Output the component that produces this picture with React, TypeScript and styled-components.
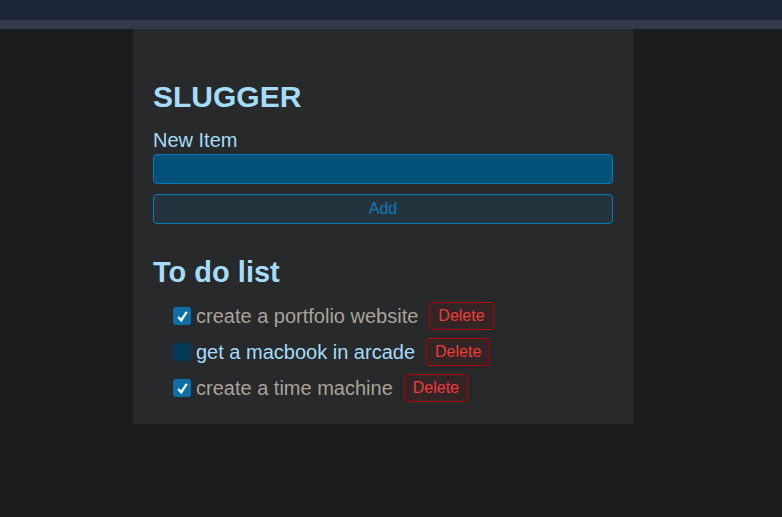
import React, { useState } from "react";
import styled, { createGlobalStyle } from "styled-components";

const Global = createGlobalStyle`
  html, body { margin: 0; padding: 0; background: #1b1c1d; }
  body { font-family: "Liberation Sans", Arial, sans-serif; }
  * { box-sizing: border-box; }
`;

const Page = styled.div`
  min-height: 517px;
  background: #1b1c1d;
  display: flex;
  flex-direction: column;
`;

const TopBar = styled.div`
  height: 20px;
  background: #1c2539;
`;

const SubBar = styled.div`
  height: 9px;
  background: #333a4b;
`;

const Card = styled.main`
  width: 500px;
  margin-left: 133px;
  background: #27292a;
  padding: 51px 20px 22px 20px;
  display: flex;
  flex-direction: column;
`;

const Title = styled.h1`
  margin: 0;
  font-size: 30px;
  font-weight: bold;
  color: #a5dcf9;
  line-height: 34px;
`;

const Label = styled.label`
  margin-top: 15px;
  font-size: 20px;
  line-height: 23px;
  color: #a5dcf9;
`;

const Input = styled.input`
  margin-top: 2px;
  height: 30px;
  width: 100%;
  background: #015178;
  border: 1px solid #0b7ab8;
  border-radius: 4px;
  outline: none;
  color: #a5dcf9;
  font-family: inherit;
  font-size: 16px;
  padding: 0 8px;
`;

const AddButton = styled.button`
  margin-top: 10px;
  height: 30px;
  width: 100%;
  background: #25343c;
  border: 1px solid #0a7bbd;
  border-radius: 4px;
  color: #0a7ab8;
  font-family: inherit;
  font-size: 16px;
  cursor: pointer;
`;

const Subtitle = styled.h2`
  margin: 32px 0 13px 0;
  font-size: 29px;
  line-height: 33px;
  font-weight: bold;
  color: #a5dcf9;
`;

const List = styled.ul`
  list-style: none;
  margin: 0;
  padding: 0 0 0 20px;
  display: flex;
  flex-direction: column;
  gap: 8px;
`;

const Row = styled.li`
  display: flex;
  align-items: center;
  height: 28px;
`;

const Box = styled.span<{ $checked: boolean }>`
  width: 18px;
  height: 18px;
  border-radius: 3px;
  background: ${(p) => (p.$checked ? "#0b6fa5" : "#023a57")};
  display: flex;
  align-items: center;
  justify-content: center;
  cursor: pointer;
  flex: none;
`;

const ItemText = styled.span<{ $done: boolean }>`
  margin-left: 5px;
  font-size: 20px;
  color: ${(p) => (p.$done ? "#aaa39a" : "#a5dcf9")};
`;

const DeleteButton = styled.button`
  margin-left: 11px;
  height: 28px;
  padding: 0 8px;
  background: #332525;
  border: 1px solid #b00000;
  border-radius: 3px;
  color: #f03a3a;
  font-family: inherit;
  font-size: 16px;
  cursor: pointer;
`;

type Item = { id: number; text: string; done: boolean };

export default function App() {
  const [items, setItems] = useState<Item[]>([
    { id: 1, text: "create a portfolio website", done: true },
    { id: 2, text: "get a macbook in arcade", done: false },
    { id: 3, text: "create a time machine", done: true },
  ]);
  const [value, setValue] = useState("");

  const add = () => {
    if (!value.trim()) return;
    setItems([...items, { id: Date.now(), text: value, done: false }]);
    setValue("");
  };

  return (
    <Page>
      <Global />
      <TopBar />
      <SubBar />
      <Card>
        <Title>SLUGGER</Title>
        <Label htmlFor="new-item">New Item</Label>
        <Input id="new-item" value={value} onChange={(e) => setValue(e.target.value)} />
        <AddButton onClick={add}>Add</AddButton>
        <Subtitle>To do list</Subtitle>
        <List>
          {items.map((it) => (
            <Row key={it.id}>
              <Box
                $checked={it.done}
                onClick={() =>
                  setItems(items.map((x) => (x.id === it.id ? { ...x, done: !x.done } : x)))
                }
              >
                {it.done && (
                  <svg width="13" height="13" viewBox="0 0 12 12">
                    <path d="M2 6.5 L4.8 9.5 L10 1.8" fill="none" stroke="#e6f6ff" strokeWidth="2.2" />
                  </svg>
                )}
              </Box>
              <ItemText $done={it.done}>{it.text}</ItemText>
              <DeleteButton onClick={() => setItems(items.filter((x) => x.id !== it.id))}>
                Delete
              </DeleteButton>
            </Row>
          ))}
        </List>
      </Card>
    </Page>
  );
}
